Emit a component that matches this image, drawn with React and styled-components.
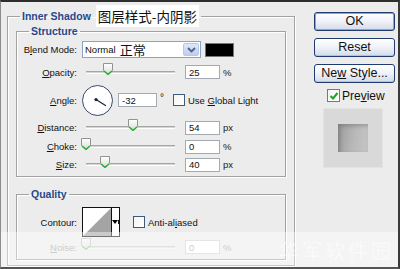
import React from "react"
import styled, { createGlobalStyle, css } from "styled-components"

const GlobalStyle = createGlobalStyle`
  html, body {
    margin: 0;
    padding: 0;
    background: #ececec;
  }
  body {
    font-family: "Liberation Sans", Arial, sans-serif;
  }
`

const etched = css`
  border: 1px solid #a2a2a2;
  box-shadow: inset 1px 1px 0 #fff, 1px 1px 0 #fff;
`

const SliderThumb = () => (
  <svg width="10" height="12" viewBox="0 0 10 12">
    <defs>
      <linearGradient id="thumbFill" x1="0" y1="0" x2="0" y2="1">
        <stop offset="0" stopColor="#ffffff" />
        <stop offset="1" stopColor="#dcdcd4" />
      </linearGradient>
    </defs>
    <path d="M0.5 0.5H9.5V7.5L5 11.5L0.5 7.5Z" fill="url(#thumbFill)" stroke="#8f968f" />
    <path d="M1 8L5 11.3L9 8" fill="none" stroke="#2bb03b" strokeWidth="1.6" />
  </svg>
)

const Slider = ({ value, disabled }) => (
  <SliderBox $disabled={disabled}>
    <Track $disabled={disabled} />
    <ThumbSpot style={{ left: `${value}%` }}>
      <SliderThumb />
    </ThumbSpot>
  </SliderBox>
)

const Check = ({ checked, disabled }) => (
  <Box $disabled={disabled}>
    {checked && (
      <svg width="10" height="10" viewBox="0 0 10 10">
        <path d="M1.5 5L4 7.5L8.5 2" fill="none" stroke="#21a121" strokeWidth="2" />
      </svg>
    )}
  </Box>
)

const App = () => {
  return (
    <>
      <GlobalStyle />
      <Frame>
        <Main>
          <OuterLegend>
            <LegendInner>
              <Title>Inner Shadow</Title>
              <Note>图层样式-内阴影</Note>
            </LegendInner>
          </OuterLegend>

          <Group $first>
            <GroupTitle>Structure</GroupTitle>
            <Rows>
              <Row $h={19}>
                <Label>B<u>l</u>end Mode:</Label>
                <Select>
                  <SelectText>
                    Normal <Cjk>正常</Cjk>
                  </SelectText>
                  <SelectArrow>
                    <svg width="9" height="6" viewBox="0 0 9 6">
                      <path d="M1 1L4.5 4.5L8 1" fill="none" stroke="#4d6185" strokeWidth="1.8" />
                    </svg>
                  </SelectArrow>
                </Select>
                <ColorChip />
              </Row>

              <Row $h={26}>
                <Label><u>O</u>pacity:</Label>
                <Slider value={25} />
                <Field>25</Field>
                <Unit>%</Unit>
              </Row>

              <Row $h={30}>
                <Label><u>A</u>ngle:</Label>
                <Dial>
                  <svg width="31" height="31" viewBox="0 0 31 31">
                    <line x1="14.5" y1="14.5" x2="24.7" y2="20.9" stroke="#1d2233" strokeWidth="1.3" />
                    <circle cx="14.5" cy="14.5" r="1.7" fill="#1d2233" />
                  </svg>
                </Dial>
                <Field $w={39} $ml={5}>-32</Field>
                <Degree>°</Degree>
                <Check />
                <CheckText>Use <u>G</u>lobal Light</CheckText>
              </Row>

              <Row $h={25}>
                <Label><u>D</u>istance:</Label>
                <Slider value={53} />
                <Field>54</Field>
                <Unit>px</Unit>
              </Row>

              <Row $h={13}>
                <Label><u>C</u>hoke:</Label>
                <Slider value={0} />
                <Field>0</Field>
                <Unit>%</Unit>
              </Row>

              <Row $h={23}>
                <Label><u>S</u>ize:</Label>
                <Slider value={21} />
                <Field>40</Field>
                <Unit>px</Unit>
              </Row>
            </Rows>
          </Group>

          <Group>
            <GroupTitle>Quality</GroupTitle>
            <Rows $bottom={6}>
              <Row $h={38}>
                <Label>Contour:</Label>
                <Contour>
                  <svg width="28" height="28" viewBox="0 0 28 28">
                    <rect width="28" height="28" fill="#fff" />
                    <path d="M0 28L28 0V28Z" fill="#a4a4a4" />
                  </svg>
                  <ContourArrow>
                    <svg width="6" height="4" viewBox="0 0 6 4">
                      <path d="M0 0H6L3 4Z" fill="#000" />
                    </svg>
                  </ContourArrow>
                </Contour>
                <Check />
                <CheckText>Anti-al<u>i</u>ased</CheckText>
              </Row>

              <Row $h={12}>
                <Label $disabled><u>N</u>oise:</Label>
                <Slider value={0} disabled />
                <Field $disabled>0</Field>
                <Unit $disabled>%</Unit>
              </Row>
            </Rows>
          </Group>
        </Main>

        <Side>
          <Button $primary>OK</Button>
          <Button>Reset</Button>
          <Button>Ne<u>w</u> Style...</Button>
          <PreviewRow>
            <Check checked />
            <PreviewText>Pre<u>v</u>iew</PreviewText>
          </PreviewRow>
          <Swatch>
            <SwatchInner />
          </Swatch>
        </Side>

        <Watermark>
          <WatermarkText>华军软件园</WatermarkText>
        </Watermark>
      </Frame>
    </>
  )
}

const Frame = styled.div`
  position: relative;
  display: flex;
  align-items: flex-start;
  box-sizing: border-box;
  width: 400px;
  height: 269px;
  padding: 3px 0 0 6px;
  background: #ececec;
  border-top: 2px solid #2e2e2e;
  border-right: 2px solid #3a3a3a;
  border-bottom: 2px solid #555;
  border-left: 1px solid #8c8c8c;
  overflow: hidden;
`

const Main = styled.fieldset`
  box-sizing: border-box;
  width: 288px;
  margin: 0;
  padding: 0 8px 5px 8px;
  min-width: 0;
  ${etched}
`

const OuterLegend = styled.legend`
  margin-left: 4px;
  padding: 0 2px;
  height: 22px;
`

const LegendInner = styled.span`
  display: flex;
  align-items: center;
  height: 22px;
  gap: 5px;
`

const Title = styled.span`
  font-size: 10.5px;
  font-weight: bold;
  color: #27498a;
`

const Note = styled.span`
  display: flex;
  align-items: center;
  height: 22px;
  padding: 0 2px;
  background: #fff;
  font-family: "Noto Sans CJK SC", sans-serif;
  font-size: 13.5px;
  color: #111;
`

const Group = styled.fieldset`
  margin: ${(p) => (p.$first ? "-2px" : "11px")} 0 0 0;
  padding: 0;
  min-width: 0;
  ${etched}
`

const GroupTitle = styled.legend`
  margin-left: 12px;
  padding: 0 2px;
  height: 12px;
  line-height: 12px;
  font-size: 10.5px;
  font-weight: bold;
  color: #27498a;
`

const Rows = styled.div`
  display: flex;
  flex-direction: column;
  padding: 3px 0 ${(p) => p.$bottom || 0}px 0;
`

const Row = styled.div`
  display: flex;
  align-items: center;
  height: ${(p) => p.$h}px;
`

const Label = styled.span`
  flex: none;
  width: 60px;
  margin-right: 5px;
  text-align: right;
  font-size: 9.5px;
  color: ${(p) => (p.$disabled ? "#a8a8a8" : "#111")};
  white-space: nowrap;
`

const Select = styled.div`
  box-sizing: border-box;
  display: flex;
  align-items: stretch;
  width: 119px;
  height: 17px;
  background: #fff;
  border: 1px solid #8fa2bf;
`

const SelectText = styled.span`
  flex: 1;
  display: flex;
  align-items: center;
  gap: 4px;
  padding-left: 2px;
  font-size: 9.5px;
  color: #111;
`

const Cjk = styled.span`
  font-family: "Noto Sans CJK SC", sans-serif;
  font-size: 13px;
`

const SelectArrow = styled.span`
  display: flex;
  align-items: center;
  justify-content: center;
  width: 14px;
  margin: 1px;
  border-radius: 2px;
  background: linear-gradient(#e0e9fb, #bccdf3);
  border: 1px solid #b6c7ec;
`

const ColorChip = styled.span`
  width: 29px;
  height: 14px;
  margin-left: 4px;
  background: #000;
  border: 1px solid #777;
  box-sizing: border-box;
`

const SliderBox = styled.div`
  position: relative;
  width: 89px;
  margin: 0 10px 0 4px;
  display: flex;
  align-items: center;
  height: 12px;
  opacity: ${(p) => (p.$disabled ? 0.45 : 1)};
`

const Track = styled.div`
  width: 100%;
  height: 1px;
  border-top: 1px solid #a5a5a5;
  border-bottom: 1px solid #fff;
  background: #d4d4d4;
`

const ThumbSpot = styled.span`
  position: absolute;
  top: -3px;
  transform: translateX(-50%);
  display: flex;
`

const Field = styled.span`
  box-sizing: border-box;
  display: flex;
  align-items: center;
  width: ${(p) => p.$w || 35}px;
  height: 14px;
  margin-left: ${(p) => p.$ml || 0}px;
  padding-left: 3px;
  background: #fff;
  border: 1px solid ${(p) => (p.$disabled ? "#cfd3d8" : "#a3aab4")};
  font-size: 9.5px;
  color: ${(p) => (p.$disabled ? "#a8a8a8" : "#111")};
`

const Unit = styled.span`
  margin-left: 3px;
  font-size: 9.5px;
  color: ${(p) => (p.$disabled ? "#a8a8a8" : "#222")};
`

const Dial = styled.span`
  box-sizing: border-box;
  display: flex;
  width: 31px;
  height: 31px;
  border-radius: 50%;
  border: 1.5px solid #3c4b6e;
  background: radial-gradient(circle at 40% 40%, #fff 55%, #e6e8ee);
  svg {
    margin: -1px 0 0 -1px;
  }
`

const Degree = styled.span`
  width: 13px;
  padding-left: 3px;
  font-size: 10px;
  color: #222;
  align-self: flex-start;
  margin-top: 7px;
`

const Box = styled.span`
  box-sizing: border-box;
  flex: none;
  display: flex;
  align-items: center;
  justify-content: center;
  width: 12px;
  height: 12px;
  background: linear-gradient(135deg, #f4f4f0, #fff);
  border: 1px solid ${(p) => (p.$disabled ? "#c5c5c5" : "#3c5a7c")};
`

const CheckText = styled.span`
  margin-left: 3px;
  font-size: 9.5px;
  color: #111;
  white-space: nowrap;
`

const Contour = styled.div`
  box-sizing: border-box;
  display: flex;
  width: 38px;
  height: 30px;
  margin-right: 13px;
  border: 1px solid #111;
  background: #fff;
  svg:first-child {
    border-right: 1px solid #111;
  }
`

const ContourArrow = styled.span`
  flex: 1;
  display: flex;
  align-items: center;
  justify-content: center;
`

const Side = styled.div`
  display: flex;
  flex-direction: column;
  width: 81px;
  margin-left: 19px;
  padding-top: 7px;
  gap: 7px;
`

const Button = styled.button`
  box-sizing: border-box;
  height: 19px;
  padding: 0;
  border: 1px solid #1f3b6f;
  border-radius: 3px;
  background: linear-gradient(#ffffff 0%, #f1f3f8 45%, #d3dbea 100%);
  box-shadow: ${(p) => (p.$primary ? "inset 0 0 0 1px #8aa6d8" : "inset 0 -1px 0 #b7c3da")};
  font-family: "Liberation Sans", Arial, sans-serif;
  font-size: 12.5px;
  color: #111;
  line-height: 17px;
`

const PreviewRow = styled.div`
  display: flex;
  align-items: center;
  height: 13px;
  margin-top: -1px;
  padding-left: 13px;
  ${Box} {
    width: 13px;
    height: 13px;
    border-color: #6b7c8f;
  }
`

const PreviewText = styled.span`
  margin-left: 2px;
  font-size: 12px;
  color: #111;
`

const Swatch = styled.div`
  display: flex;
  align-items: center;
  justify-content: center;
  width: 60px;
  height: 60px;
  margin: -1px 0 0 9px;
  background: #d9d9d9;
  box-shadow: inset 0 0 0 1px #e3e3e3;
`

const SwatchInner = styled.div`
  width: 30px;
  height: 28px;
  background: linear-gradient(100deg, #9c9c9c, #b9b9b9 55%, #c6c6c6);
  box-shadow: inset 2px 2px 4px rgba(0, 0, 0, 0.2);
`

const Watermark = styled.div`
  position: absolute;
  left: 0;
  right: 0;
  top: 230px;
  bottom: 0;
  display: flex;
  justify-content: flex-end;
  align-items: flex-end;
  padding: 0 4px 2px 0;
  background: rgba(255, 255, 255, 0.42);
  pointer-events: none;
`

const WatermarkText = styled.span`
  font-family: "Noto Sans CJK SC", sans-serif;
  font-size: 20px;
  letter-spacing: 3px;
  color: rgba(255, 255, 255, 0.55);
`

export default App
